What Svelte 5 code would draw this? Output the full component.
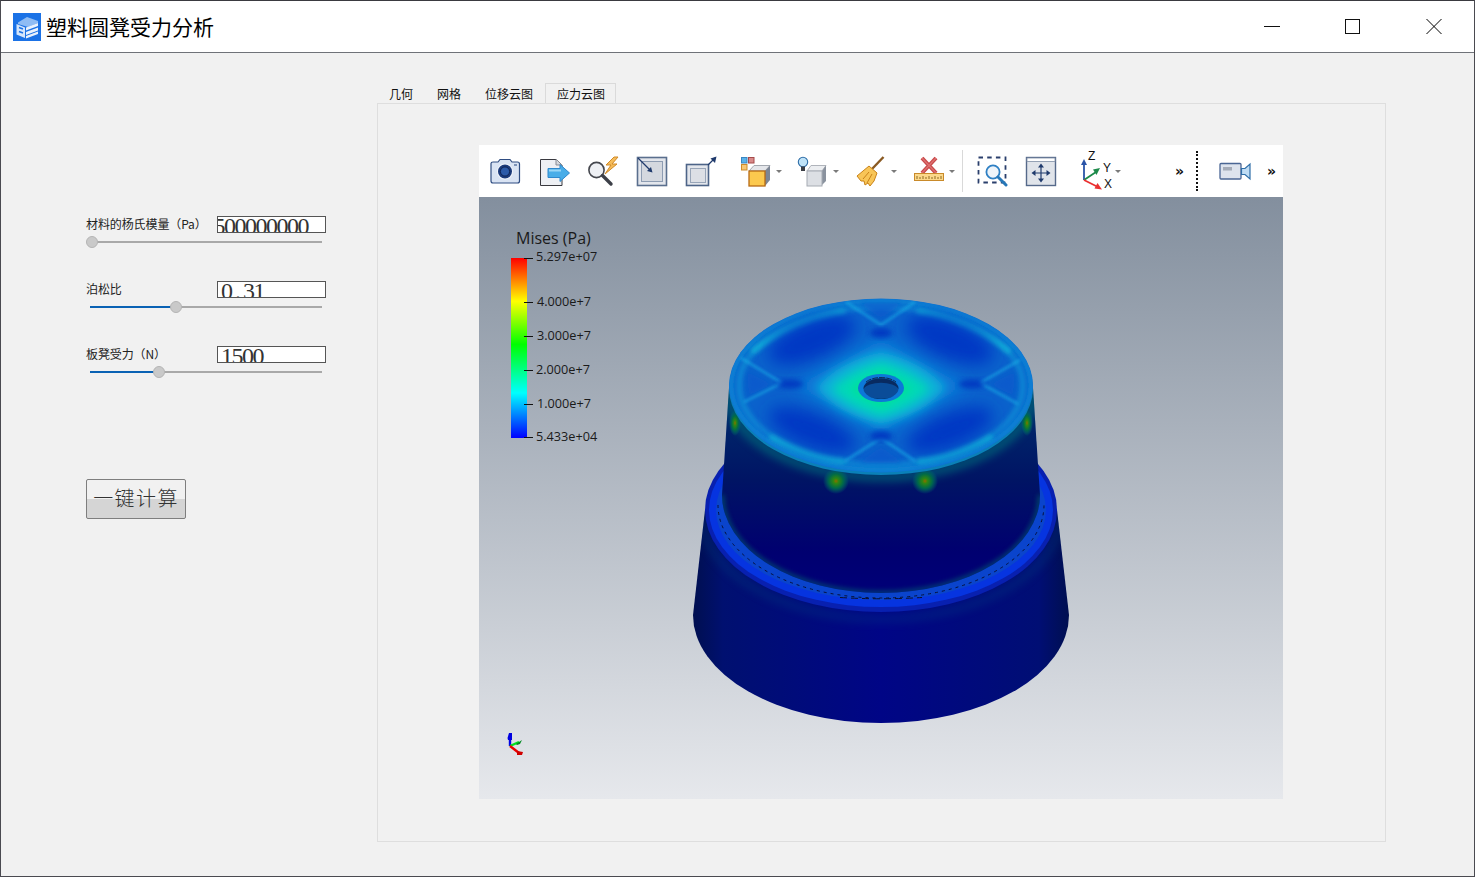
<script>
  const params = [
    { label: '材料的杨氏模量（Pa）', value: '500000000', overflow: true, pos: 0, fill: 0 },
    { label: '泊松比', value: '0.31', overflow: false, pos: 83.5, fill: 85 },
    { label: '板凳受力（N）', value: '1500', overflow: false, pos: 66.5, fill: 68 }
  ];
  const tabs = ['几何', '网格', '位移云图', '应力云图'];
  const ticks = [
    { y: 257, ty: 261, label: '5.297e+07', x: 536 },
    { y: 301, ty: 306, label: '4.000e+7', x: 537 },
    { y: 335, ty: 340, label: '3.000e+7', x: 537 },
    { y: 369, ty: 374, label: '2.000e+7', x: 536 },
    { y: 403, ty: 408, label: '1.000e+7', x: 537 },
    { y: 436, ty: 441, label: '5.433e+04', x: 536 }
  ];
</script>

<div class="window">
  <header class="titlebar">
    <svg class="logo" viewBox="0 0 28 28" width="28" height="28">
      <rect width="28" height="28" fill="#1b72e6"/>
      <path d="M5 9.500 L14 4 L25 8 L25 10 L15 14 L5 11Z" fill="#8fbcf4"/>
      <path d="M3.500 11 L12 14.500 L12 25 L3.500 21.500Z" fill="#d6e6fb"/>
      <path d="M13 14.500 L25 10 L25 13 L13 17.500Z M13 19 L25 14.500 L25 17.500 L13 22Z M13 23 L25 18.500 L25 21 L13 25.500Z" fill="#eaf2fd"/>
      <path d="M6 14.500 L10 16 M6 18.500 L10 20" stroke="#1b72e6" stroke-width="1.600"/>
    </svg>
    <span class="title">塑料圆凳受力分析</span>
    <div class="controls">
      <div class="ctl"><svg width="16" height="16" viewBox="0 0 16 16"><path d="M0 7.500H16" stroke="#111" stroke-width="1"/></svg></div>
      <div class="ctl"><svg width="16" height="16" viewBox="0 0 16 16"><rect x="0.500" y="0.500" width="14" height="14" fill="none" stroke="#111"/></svg></div>
      <div class="ctl"><svg width="16" height="16" viewBox="0 0 16 16"><path d="M0.500 0L15.500 15M15.500 0L0.500 15" stroke="#000" stroke-width="1"/></svg></div>
    </div>
  </header>

  <main class="content">
    <section class="params">
      {#each params as p}
        <div class="param">
          <div class="param-head">
            <span class="label">{p.label}</span>
            <div class="field" class:overflow={p.overflow}>
              {#if p.value.includes('.')}
                <span class="digits">{p.value.split('.')[0]}<span class="dot">.</span>{p.value.split('.')[1]}</span>
              {:else}
                <span class="digits">{p.value}</span>
              {/if}
            </div>
          </div>
          <div class="slider">
            <div class="track"></div>
            <div class="filled" style="width:{p.fill}px"></div>
            <div class="handle" style="left:{p.pos}px"></div>
          </div>
        </div>
      {/each}
      <button class="run">一键计算</button>
    </section>

    <section class="tabset">
      <nav class="tabs">
        {#each tabs as t, i}
          <div class="tab" class:active={i === 3}>{t}</div>
        {/each}
      </nav>
      <div class="pane">
        <div class="viewer">
          <div class="toolbar">
            <svg class="tool t-camera" width="32" height="32" viewBox="0 0 32 32">
              <path d="M2 8.500Q2 7 4 7H9L11 4.500H21L23 7H28.500Q30.500 7 30.500 9V26Q30.500 28 28.500 28H4Q2 28 2 26Z" fill="#d9e3f3" stroke="#2f4d82" stroke-width="1.200"/>
              <circle cx="16" cy="16.500" r="8" fill="#f2f5fb"/>
              <circle cx="16" cy="16.500" r="7" fill="#1b3a7a"/>
              <circle cx="16" cy="16.500" r="4.600" fill="#2c5aa8" stroke="#0f2454" stroke-width="1"/>
              <rect x="25" y="9" width="3" height="2" fill="#7d93b8"/>
            </svg>
            <svg class="tool t-export" width="32" height="32" viewBox="0 0 32 32">
              <path d="M1.500 4.500H17L23 10V30.500H1.500Z" fill="#eef0f4" stroke="#39393f" stroke-width="1"/>
              <path d="M17 4.500V10H23" fill="#d5d8de" stroke="#8a8d95" stroke-width="1"/>
              <path d="M9 13.500H21V9.500L30.500 18L21 26.500V22.500H9Z" fill="#49ade8" stroke="#2f88cc" stroke-width="1"/>
              <path d="M10 15.500H22" stroke="#9ad6f6" stroke-width="2"/>
            </svg>
            <svg class="tool t-bolt" width="32" height="32" viewBox="0 0 32 32">
              <path d="M27 2L19 10L24 10L18 19L30 9L25 9L31 2Z" fill="#f5bc5a" stroke="#d08a28" stroke-width="1"/>
              <circle cx="9.500" cy="15" r="7.600" fill="#eef0f4" stroke="#45474e" stroke-width="1.600"/>
              <path d="M15.500 20.500L24 29" stroke="#3d4048" stroke-width="3.400" stroke-linecap="round"/>
            </svg>
            <svg class="tool t-fit" width="32" height="32" viewBox="0 0 32 32">
              <rect x="1.500" y="2.500" width="29" height="28" fill="#e3e6ec" stroke="#5a6f8e" stroke-width="1.600"/>
              <rect x="5.500" y="6.500" width="21" height="20" fill="#d4d8df" stroke="#8d9cb2" stroke-width="1"/>
              <path d="M2 3L15 16" stroke="#1f3a6c" stroke-width="1.300"/>
              <path d="M16.500 17.500L11 16L15 12Z" fill="#1f3a6c"/>
            </svg>
            <svg class="tool t-out" width="32" height="32" viewBox="0 0 32 32">
              <rect x="1.500" y="9.500" width="22" height="21" fill="#e3e6ec" stroke="#4d6488" stroke-width="1.600"/>
              <rect x="5.500" y="13.500" width="15" height="14" fill="#dcdfe5" stroke="#98a5b8" stroke-width="1"/>
              <path d="M23 10L30 3" stroke="#1f3a6c" stroke-width="1.300"/>
              <path d="M31.500 1.500L30 8L25.500 3.500Z" fill="#1f3a6c"/>
            </svg>
            <div class="drop d-cube">
              <svg class="tool" width="32" height="32" viewBox="0 0 32 32">
                <rect x="1.500" y="2.500" width="5.500" height="5.500" fill="#59b2ea" stroke="#3a86c2"/>
                <rect x="8.500" y="2.500" width="5.500" height="5.500" fill="#d88a8a" stroke="#a54a4a"/>
                <rect x="1.500" y="9.500" width="5.500" height="5.500" fill="#f7c775" stroke="#cc8b2a"/>
                <path d="M9 16L14 10.500H30L25 16Z" fill="#e4e6ea" stroke="#a3a8b0"/>
                <path d="M25 16L30 10.500V25L25 31Z" fill="#7c8594"/>
                <rect x="9" y="16" width="16" height="15" fill="#fcc94e" stroke="#b76a14" stroke-width="1.300"/>
              </svg>
              <span class="caret"></span>
            </div>
            <div class="drop d-bulb">
              <svg class="tool" width="32" height="32" viewBox="0 0 32 32">
                <path d="M11 16L15 10.500H30L26 16Z" fill="#eceef1" stroke="#b0b4bb"/>
                <path d="M26 16L30 10.500V26L26 30Z" fill="#8a929e"/>
                <rect x="11" y="16" width="15" height="15" fill="#dcdfe4" stroke="#a6abb3"/>
                <circle cx="7" cy="7" r="4.700" fill="#bfe3f8" stroke="#2f6ea8" stroke-width="1.100"/>
                <rect x="5" y="11.500" width="4" height="4.500" fill="#3a3d44"/>
              </svg>
              <span class="caret"></span>
            </div>
            <div class="drop d-broom">
              <svg class="tool" width="32" height="32" viewBox="0 0 32 32">
                <path d="M27.500 2L16 14" stroke="#8a5a22" stroke-width="2.400"/>
                <path d="M13 11L21 18L18 26L14 31L12 28L9 30L8 26L5 26L1 21Z" fill="#f8c557" stroke="#c98218" stroke-width="1"/>
                <path d="M13 17L7 24M16 19L11 28" stroke="#c98218" stroke-width="1"/>
              </svg>
              <span class="caret"></span>
            </div>
            <div class="drop d-measure">
              <svg class="tool" width="32" height="32" viewBox="0 0 32 32">
                <path d="M9 3L23 18M23 3L9 18" stroke="#c8494a" stroke-width="4"/>
                <path d="M9 3L23 18M23 3L9 18" stroke="#dd7070" stroke-width="1.400"/>
                <rect x="1.500" y="18.500" width="29" height="7" fill="#fbd88a" stroke="#c98a2a"/>
                <path d="M4 24V21M7 24V22M10 24V21M13 24V22M16 24V21M19 24V22M22 24V21M25 24V22M28 24V21" stroke="#8d6a20" stroke-width="1"/>
              </svg>
              <span class="caret"></span>
            </div>
            <span class="sep"></span>
            <svg class="tool t-zoombox" width="32" height="32" viewBox="0 0 32 32">
              <rect x="2.500" y="2.500" width="27" height="25" fill="none" stroke="#2a3f6c" stroke-width="1.800" stroke-dasharray="4.500 4.200"/>
              <circle cx="17" cy="17" r="6.600" fill="#eef4fa" stroke="#2f80c4" stroke-width="1.800"/>
              <path d="M22 22L30 30" stroke="#2677b8" stroke-width="3" stroke-linecap="round"/>
            </svg>
            <svg class="tool t-move" width="32" height="32" viewBox="0 0 32 32">
              <rect x="1.500" y="2.500" width="29" height="28" fill="#e0e4ea" stroke="#55698a" stroke-width="1.400"/>
              <rect x="2" y="3" width="28" height="3.500" fill="#fff" stroke="#7f8ea6" stroke-width="0.800"/>
              <path d="M16 10V26M8 18H24" stroke="#1f3a6c" stroke-width="1.200"/>
              <path d="M16 8.500L13 12.500H19ZM16 27.500L13 23.500H19ZM6.500 18L10.500 15V21ZM25.500 18L21.500 15V21Z" fill="#1f3a6c"/>
            </svg>
            <div class="drop d-axes">
              <svg class="tool" width="44" height="42" viewBox="0 0 44 42">
                <path d="M4 30V13" stroke="#2a54a8" stroke-width="1.800"/>
                <path d="M4 9L1 15H7Z" fill="#2a54a8"/>
                <path d="M4 30L16 22" stroke="#1c8a4a" stroke-width="1.800"/>
                <path d="M20 18L13 19.500L16.500 25Z" fill="#1c8a4a"/>
                <path d="M4 30L18 37" stroke="#ea3030" stroke-width="1.800"/>
                <path d="M22 39.500L14.500 38.500L17.500 33Z" fill="#ea3030"/>
                <text x="8" y="10" class="axis">Z</text>
                <text x="23" y="21.500" class="axis">Y</text>
                <text x="24" y="38" class="axis">X</text>
              </svg>
              <span class="caret"></span>
            </div>
            <span class="more m1">»</span>
            <span class="dotted"></span>
            <svg class="tool t-video" width="32" height="32" viewBox="0 0 32 32">
              <rect x="1" y="8.500" width="21" height="15.500" rx="1" fill="#dde3ed" stroke="#4a6694" stroke-width="1.300"/>
              <rect x="4" y="12" width="9" height="3.500" fill="#a4abb8"/>
              <path d="M22.500 13.500L26 13.500L31 9V24L26 19.500H22.500Z" fill="#bfdcf4" stroke="#2f6ea8" stroke-width="1.200"/>
            </svg>
            <span class="more m2">»</span>
          </div>

          <svg class="scene" viewBox="479 197 804 602" width="804" height="602">
            <defs>
              <linearGradient id="bar" x1="0" y1="1" x2="0" y2="0">
                <stop offset="0" stop-color="#0000ff"/>
                <stop offset="0.25" stop-color="#00ffff"/>
                <stop offset="0.52" stop-color="#00ff00"/>
                <stop offset="0.76" stop-color="#ffff00"/>
                <stop offset="1" stop-color="#ff0000"/>
              </linearGradient>
              <linearGradient id="cone" x1="0" y1="0" x2="1" y2="0">
                <stop offset="0" stop-color="#000f50"/>
                <stop offset="0.08" stop-color="#001070"/>
                <stop offset="0.5" stop-color="#000586"/>
                <stop offset="0.92" stop-color="#000e74"/>
                <stop offset="1" stop-color="#000f50"/>
              </linearGradient>
              <linearGradient id="body" x1="0" y1="0" x2="0" y2="1">
                <stop offset="0" stop-color="#00306e"/>
                <stop offset="0.45" stop-color="#001464"/>
                <stop offset="0.8" stop-color="#000070"/>
                <stop offset="1" stop-color="#000078"/>
              </linearGradient>
              <radialGradient id="hot">
                <stop offset="0" stop-color="#8a6c00"/>
                <stop offset="0.2" stop-color="#2e8612"/>
                <stop offset="0.55" stop-color="#006a48"/>
                <stop offset="1" stop-color="#006a70" stop-opacity="0"/>
              </radialGradient>
              <filter id="b1" x="-30%" y="-30%" width="160%" height="160%"><feGaussianBlur stdDeviation="1.600"/></filter>
              <filter id="b2" x="-30%" y="-30%" width="160%" height="160%"><feGaussianBlur stdDeviation="2.500"/></filter>
              <filter id="b5" x="-30%" y="-30%" width="160%" height="160%"><feGaussianBlur stdDeviation="5"/></filter>
              <filter id="b9" x="-40%" y="-40%" width="180%" height="180%"><feGaussianBlur stdDeviation="8"/></filter>
              <clipPath id="topclip"><ellipse cx="881" cy="385.500" rx="152" ry="87"/></clipPath>
              <clipPath id="bodyclip"><path d="M729 388L722 495A159 98 0 0 0 1040 495L1033 388Z"/></clipPath>
              <clipPath id="coneclip"><path d="M705 510L693 615A188 108 0 0 0 1069 615L1057 510Z"/></clipPath>
            </defs>

            <text x="516" y="244" class="leg-title">Mises (Pa)</text>
            <rect x="511" y="258" width="16" height="180" fill="url(#bar)"/>
            {#each ticks as t}
              <path d="M524 {t.y + 1}.5H533" stroke="#111" stroke-width="1"/>
              <text x={t.x} y={t.ty} class="leg-tick">{t.label}</text>
            {/each}

            <path d="M705 510L693 615A188 108 0 0 0 1069 615L1057 510Z" fill="url(#cone)"/>
            <g clip-path="url(#coneclip)">
              <ellipse cx="881" cy="513" rx="180" ry="106" fill="none" stroke="#006088" stroke-width="5" opacity="0.35" filter="url(#b5)"/>
            </g>
            <ellipse cx="881" cy="510" rx="176" ry="102" fill="#0820b0"/>
            <ellipse cx="881" cy="510" rx="172" ry="97" fill="#0634e0"/>
            <ellipse cx="881" cy="510" rx="165" ry="90" fill="#0a44cc"/>
            <path d="M718 505A163 93 0 0 0 1044 505" fill="none" stroke="#06103a" stroke-width="1" stroke-dasharray="3 4"/>
            <path d="M840 597.500Q881 600 922 597.500" fill="none" stroke="#0a1030" stroke-width="1" stroke-dasharray="7 4"/>

            <path d="M729 388L722 495A159 98 0 0 0 1040 495L1033 388Z" fill="url(#body)"/>
            <g clip-path="url(#bodyclip)">
              <path d="M722 495A159 98 0 0 0 1040 495" fill="none" stroke="#007a70" stroke-width="4" opacity="0.6" filter="url(#b2)"/>
              <ellipse cx="881" cy="389" rx="154" ry="88" fill="none" stroke="#00a088" stroke-width="8" opacity="0.5" filter="url(#b5)"/>
              <ellipse cx="836" cy="481" rx="13" ry="13" fill="url(#hot)"/>
              <ellipse cx="925" cy="481" rx="13" ry="13" fill="url(#hot)"/>
              <ellipse cx="735" cy="423" rx="6" ry="13" fill="url(#hot)"/>
              <ellipse cx="1027" cy="423" rx="6" ry="13" fill="url(#hot)"/>
            </g>

            <ellipse cx="881" cy="388" rx="152" ry="87" fill="#0a80b8"/>
            <g clip-path="url(#topclip)">
              <ellipse cx="881" cy="385.500" rx="152" ry="87" fill="#0a62cc"/>
              <ellipse cx="881" cy="385.500" rx="150" ry="85" fill="none" stroke="#0a80d4" stroke-width="5" filter="url(#b1)"/>
              <ellipse cx="881" cy="386" rx="142" ry="79" fill="none" stroke="#14b8e0" stroke-width="5" opacity="0.5" filter="url(#b2)"/>
              <g fill="none" stroke="#18d0dc" stroke-width="5" opacity="0.7" filter="url(#b2)">
                <path d="M752 352Q790 322 845 311"/>
                <path d="M1010 352Q972 322 917 311"/>
                <path d="M770 436Q810 458 845 461"/>
                <path d="M992 436Q952 458 917 461"/>
              </g>
              <ellipse cx="812" cy="340" rx="46" ry="19" fill="#0438c4" filter="url(#b9)" transform="rotate(-22 812 340)"/>
              <ellipse cx="950" cy="340" rx="46" ry="19" fill="#0438c4" filter="url(#b9)" transform="rotate(22 950 340)"/>
              <ellipse cx="812" cy="430" rx="46" ry="17" fill="#0438c4" filter="url(#b9)" transform="rotate(22 812 430)"/>
              <ellipse cx="950" cy="430" rx="46" ry="17" fill="#0438c4" filter="url(#b9)" transform="rotate(-22 950 430)"/>
              <path d="M881 340L965 386L881 432L797 386Z" fill="#0a84dc" filter="url(#b9)"/>
              <path d="M881 352Q925 362 945 388Q925 414 881 424Q837 414 817 388Q837 362 881 352Z" fill="#08b0d8" filter="url(#b5)"/>
              <path d="M881 362Q912 370 930 389Q912 408 881 416Q850 408 832 389Q850 370 881 362Z" fill="#00d8b8" filter="url(#b5)"/>
              <path d="M881 372L912 389L881 406L850 389Z" fill="#00e48c" filter="url(#b5)"/>
              <g fill="#0a56cc" opacity="0.6" filter="url(#b2)">
                <path d="M858 303H904L881 318Z"/>
                <path d="M747 372L772 384L749 396Z"/>
                <path d="M1015 372L990 384L1013 396Z"/>
                <path d="M858 463H904L881 447Z"/>
              </g>
              <g fill="none" stroke="#1cb4e8" stroke-width="2.200" opacity="0.7" filter="url(#b1)">
                <path d="M846 302L881 325L915 302"/>
                <path d="M741 358L782 383L744 402"/>
                <path d="M1020 360L980 383L1018 404"/>
                <path d="M845 461L881 438L915 461"/>
              </g>
              <ellipse cx="881" cy="333" rx="11" ry="5" fill="#0234c0" opacity="0.85" filter="url(#b2)"/>
              <ellipse cx="790" cy="384" rx="13" ry="4.500" fill="#0234c0" opacity="0.85" filter="url(#b2)"/>
              <ellipse cx="972" cy="384" rx="13" ry="4.500" fill="#0234c0" opacity="0.85" filter="url(#b2)"/>
              <ellipse cx="881" cy="436" rx="11" ry="5" fill="#0234c0" opacity="0.85" filter="url(#b2)"/>
            </g>
            <ellipse cx="881" cy="388" rx="23" ry="14" fill="#0c78d8"/>
            <ellipse cx="881" cy="388.500" rx="17.500" ry="10.500" fill="#0a4c98"/>
            <path d="M863.500 389A17.500 10.500 0 0 1 898.500 389A18 8 0 0 0 863.500 389Z" fill="#082a60"/>
            <path d="M868 396A18 10 0 0 0 894 396A20 11 0 0 1 868 396Z" fill="#003a78"/>
            <path d="M866 382A18 10 0 0 1 896 382" fill="none" stroke="#0c1a30" stroke-width="0.800" stroke-dasharray="6 1"/>

            <g fill="none" stroke-width="2.400">
              <path d="M510 746V736" stroke="#0000e8"/>
              <path d="M510 746L519 742" stroke="#00e020"/>
              <path d="M510 746L519 753" stroke="#e80000"/>
            </g>
            <path d="M507.500 738L509 733H512L512 740H508Z" fill="#0000e0"/>
            <path d="M516 744L522 740L520 744L517 745Z" fill="#008a20"/>
            <path d="M517 751L523 752L522 755L517 755Z" fill="#d00000"/>
          </svg>
        </div>
      </div>
    </section>
  </main>
</div>

<style>
  :global(body) { margin: 0; background: #f0f0f0; }
  .window {
    width: 1475px; height: 877px; box-sizing: border-box;
    border: 1px solid #4a4a50; border-top-color: #3a3a40;
    display: flex; flex-direction: column; overflow: hidden;
    background: #f1f1f1;
    font-family: "Noto Sans CJK SC", "Noto Sans", sans-serif;
    color: #111;
  }
  .titlebar {
    height: 52px; flex: none; box-sizing: border-box; background: #fff;
    border-bottom: 1px solid #6f7278;
    display: flex; align-items: center; padding-left: 12px;
  }
  .logo { flex: none; }
  .title { margin-left: 5px; font-size: 21px; color: #000; line-height: 28px; margin-top: -2px; }
  .controls { margin-left: auto; display: flex; }
  .ctl { width: 81px; height: 51px; display: flex; align-items: center; justify-content: center; }
  .content { flex: 1; display: flex; min-height: 0; }
  .params { width: 376px; flex: none; box-sizing: border-box; padding: 163px 0 0 85px; }
  .param { height: 65px; width: 240px; }
  .param-head { display: flex; align-items: center; justify-content: space-between; height: 17px; }
  .label { font-size: 12px; line-height: 15px; padding-bottom: 2px; white-space: nowrap; letter-spacing: -0.1px; color: #222; }
  .field {
    width: 109px; height: 17px; box-sizing: border-box; flex: none;
    border: 1px solid #555; background: #fff; overflow: hidden;
    display: flex; padding-left: 3px;
  }
  .field.overflow { justify-content: flex-end; padding: 0 17px 0 0; }
  .digits {
    font-family: "Liberation Serif", serif; font-size: 24px; line-height: 20px;
    letter-spacing: -1.5px; color: #333; white-space: nowrap; flex: none; margin-top: -1px;
  }
  .dot { padding: 0 3.5px; }
  .slider { position: relative; height: 12px; margin-top: 3px; }
  .track { position: absolute; left: 4px; right: 4px; top: 5px; height: 2px; background: #a9a9a9; }
  .filled { position: absolute; left: 4px; top: 5px; height: 2px; background: #0a62b4; }
  .handle {
    position: absolute; top: 0; width: 12px; height: 12px; box-sizing: border-box;
    border-radius: 50%; background: #c9c9c9; border: 1px solid #b4b4b4;
  }
  .run {
    display: block; margin-top: 68px; width: 100px; height: 40px; box-sizing: border-box;
    padding: 0 0 3px; border: 1px solid #7e7e7e; border-radius: 2px;
    background: linear-gradient(#f1f1f1 0, #f1f1f1 50%, #d5d5d5 50%, #d5d5d5 100%);
    font-family: "Noto Sans CJK SC", sans-serif; font-size: 20px; letter-spacing: 1.4px;
    color: #333; font-weight: 300;
  }
  .tabset { width: 1009px; flex: none; padding-top: 30px; display: flex; flex-direction: column; }
  .tabs { display: flex; height: 20px; flex: none; }
  .tab { padding: 0 12px; font-size: 12px; line-height: 22px; height: 20px; color: #111; }
  .tab.active {
    box-sizing: border-box; line-height: 20px;
    border: 1px solid #dadada; border-bottom: none; padding: 0 10px 0 11px;
  }
  .pane {
    width: 1009px; height: 739px; box-sizing: border-box;
    border: 1px solid #dedede; padding: 41px 0 0 101px; flex: none;
  }
  .viewer { width: 804px; height: 654px; display: flex; flex-direction: column; }
  .toolbar {
    height: 52px; flex: none; background: #fff;
    display: flex; align-items: center; padding-left: 10px; box-sizing: border-box;
  }
  .tool { display: block; flex: none; }
  .t-export { margin-left: 18px; }
  .t-bolt { margin-left: 16px; }
  .t-fit { margin-left: 17px; }
  .t-out { margin-left: 17px; }
  .drop { display: flex; align-items: center; flex: none; }
  .caret {
    flex: none; width: 0; height: 0; margin-top: 1px;
    border-left: 3px solid transparent; border-right: 3px solid transparent; border-top: 3px solid #7a7a7a;
  }
  .d-cube { margin-left: 23px; }
  .d-cube .caret { margin-left: 4px; }
  .d-bulb { margin-left: 14px; }
  .d-bulb .caret { margin-left: 5px; }
  .d-broom { margin-left: 17px; }
  .d-broom .caret { margin-left: 3px; }
  .d-measure { margin-left: 16px; }
  .d-measure .caret { margin-left: 4px; }
  .sep { width: 1px; height: 42px; background: #d9d9d9; margin-left: 7px; flex: none; }
  .t-zoombox { margin-left: 13px; }
  .t-move { margin-left: 17px; }
  .d-axes { margin-left: 23px; }
  .axis { font-family: "Liberation Sans", sans-serif; font-size: 12px; fill: #111; }
  .d-axes .caret { margin-left: -9px; margin-top: 0; }
  .more { font-family: "DejaVu Sans", sans-serif; font-size: 14px; font-weight: 700; color: #111; line-height: 14px; flex: none; }
  .m1 { margin-left: 54px; }
  .dotted { width: 0; height: 40px; border-left: 2px dotted #111; margin-left: 12px; flex: none; }
  .t-video { margin-left: 21px; }
  .m2 { margin-left: 16px; }
  .scene {
    display: block; flex: none;
    background: linear-gradient(#838f9e, #e6e8ec);
  }
  .leg-title { font-family: "Open Sans", sans-serif; font-size: 16px; fill: #1a1a1a; }
  .leg-tick { font-family: "Open Sans", sans-serif; font-size: 12.7px; fill: #1a1a1a; }
</style>
